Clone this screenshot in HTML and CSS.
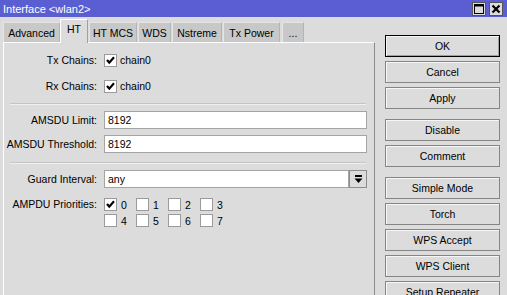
FILE: index.html
```html
<!DOCTYPE html>
<html lang="en">
<head>
    <meta charset="UTF-8">
    <title>Interface &lt;wlan2&gt;</title>
    <link rel="stylesheet" href="styles.css">
</head>
<body>
    <div class="window">

        <!-- Title bar -->
        <div class="titlebar">
            <span class="title">Interface &lt;wlan2&gt;</span>
            <div class="tb-btns">
                <span class="tb-btn">
                    <svg width="12" height="12" viewBox="0 0 12 12"><rect x="1.5" y="1.5" width="9" height="9" fill="none" stroke="#000" stroke-width="1"/><line x1="1" y1="2.5" x2="11" y2="2.5" stroke="#000" stroke-width="2"/></svg>
                </span>
                <span class="tb-btn">
                    <svg width="12" height="12" viewBox="0 0 12 12"><path d="M2.5 2.5 L9.5 9.5 M9.5 2.5 L2.5 9.5" stroke="#000" stroke-width="2.2"/></svg>
                </span>
            </div>
        </div>

        <div class="content">
            <div class="main">
                <!-- Tabs -->
                <div class="tabs">
                    <div class="tab w-adv">Advanced</div>
                    <div class="tab active w-ht">HT</div>
                    <div class="tab w-mcs">HT MCS</div>
                    <div class="tab w-wds">WDS</div>
                    <div class="tab w-ns">Nstreme</div>
                    <div class="tab w-tx">Tx Power</div>
                    <div class="tab w-more">...</div>
                </div>

                <!-- HT panel -->
                <div class="panel">
                    <div class="row check-row first">
                        <label class="lbl">Tx Chains:</label>
                        <span class="cb checked"></span>
                        <span class="cb-text">chain0</span>
                    </div>
                    <div class="row check-row">
                        <label class="lbl">Rx Chains:</label>
                        <span class="cb checked"></span>
                        <span class="cb-text">chain0</span>
                    </div>

                    <div class="sep"></div>

                    <div class="row field-row r-limit">
                        <label class="lbl">AMSDU Limit:</label>
                        <div class="input">8192</div>
                    </div>
                    <div class="row field-row r-thresh">
                        <label class="lbl">AMSDU Threshold:</label>
                        <div class="input">8192</div>
                    </div>

                    <div class="sep sep2"></div>

                    <div class="row field-row r-guard">
                        <label class="lbl">Guard Interval:</label>
                        <div class="input select">any</div>
                        <span class="drop">
                            <svg width="9" height="9" viewBox="0 0 9 9"><rect x="1" y="0" width="7" height="2" fill="#000"/><path d="M0.5 3.5 H8.5 L4.5 8 Z" fill="#000"/></svg>
                        </span>
                    </div>

                    <div class="row prio-row">
                        <label class="lbl">AMPDU Priorities:</label>
                        <div class="prio-grid">
                            <div class="prio"><span class="cb checked"></span>0</div>
                            <div class="prio"><span class="cb"></span>1</div>
                            <div class="prio"><span class="cb"></span>2</div>
                            <div class="prio"><span class="cb"></span>3</div>
                            <div class="prio"><span class="cb"></span>4</div>
                            <div class="prio"><span class="cb"></span>5</div>
                            <div class="prio"><span class="cb"></span>6</div>
                            <div class="prio"><span class="cb"></span>7</div>
                        </div>
                    </div>
                </div>
            </div>

            <!-- Buttons column -->
            <div class="side">
                <div class="btn default">OK</div>
                <div class="btn">Cancel</div>
                <div class="btn">Apply</div>
                <div class="btn group">Disable</div>
                <div class="btn">Comment</div>
                <div class="btn group">Simple Mode</div>
                <div class="btn">Torch</div>
                <div class="btn">WPS Accept</div>
                <div class="btn">WPS Client</div>
                <div class="btn">Setup Repeater</div>
            </div>
        </div>
    </div>
</body>
</html>
```

FILE: styles.css
```css
/* General */
* {
    margin: 0;
    padding: 0;
    box-sizing: border-box;
}
body {
    background-color: #dcdcdc;
    font-family: "Liberation Sans", Arial, sans-serif;
    font-size: 10.5px;
    color: #000;
    overflow: hidden;
}
.window {
    width: 507px;
    height: 295px;
    display: flex;
    flex-direction: column;
    background-color: #dcdcdc;
    overflow: hidden;
}

/* Title bar */
.titlebar {
    height: 17px;
    flex-shrink: 0;
    background-color: #5b5ed2;
    color: #fff;
    display: flex;
    align-items: center;
    justify-content: space-between;
    padding-left: 3px;
    padding-right: 4px;
}
.title {
    font-size: 11px;
}
.tb-btns {
    display: flex;
    gap: 3px;
}
.tb-btn {
    width: 14px;
    height: 14px;
    background-color: #dcdcdc;
    border: 1px solid #555;
    display: flex;
    align-items: center;
    justify-content: center;
}

.content {
    flex: 1;
    min-height: 0;
    display: flex;
}

/* Left side: tabs + panel */
.main {
    width: 375px;
    padding-left: 3px;
    display: flex;
    flex-direction: column;
}
.tabs {
    height: 25px;
    flex-shrink: 0;
    display: flex;
    align-items: flex-end;
    gap: 1px;
}
.tab {
    height: 20px;
    background-color: #c8c8c8;
    border-top: 1px solid #e4e4e4;
    border-left: 1px solid #e4e4e4;
    border-right: 1px solid #b4b4b4;
    display: flex;
    align-items: center;
    justify-content: center;
    padding-top: 1px;
}
.tab.active {
    height: 24px;
    margin-bottom: -1px;
    background-color: #dcdcdc;
    border-top: 1px solid #fff;
    border-left: 1px solid #fff;
    border-right: 1px solid #a0a0a0;
    align-items: flex-start;
    padding-top: 3px;
    position: relative;
    z-index: 1;
}
.w-adv { width: 57px; }
.w-ht { width: 28px; margin-left: -1px; }
.w-mcs { width: 48px; }
.w-wds { width: 33px; }
.w-ns { width: 50px; }
.w-tx { width: 57px; }
.w-more { width: 22px; margin-left: 1px; }

.panel {
    flex: 1;
    border-top: 1px solid #fff;
    border-left: 1px solid #fff;
    border-right: 1px solid #8c8c8c;
    display: flex;
    flex-direction: column;
}

/* Form rows */
.row {
    display: flex;
    align-items: center;
    flex-shrink: 0;
}
.lbl {
    width: 93px;
    text-align: right;
    margin-right: 7px;
    white-space: nowrap;
}
.check-row {
    height: 26px;
}
.check-row.first {
    margin-top: 4px;
}
.cb {
    width: 13px;
    height: 13px;
    background-color: #fff;
    border: 1px solid #9a9a9a;
    display: inline-block;
    flex-shrink: 0;
}
.cb.checked {
    background-image: url("data:image/svg+xml;utf8,<svg xmlns='http://www.w3.org/2000/svg' width='11' height='11' viewBox='0 0 11 11'><path d='M2 5 L4.3 7.6 L9 2.2' fill='none' stroke='black' stroke-width='2.2'/></svg>");
    background-repeat: no-repeat;
    background-position: center;
}
.cb-text {
    margin-left: 3px;
}

.sep {
    flex-shrink: 0;
    margin: 4px 8px 0 6px;
    height: 2px;
    border-top: 1px solid #c4c4c4;
    border-bottom: 1px solid #f0f0f0;
}
.sep2 {
    margin-top: 9px;
}

.field-row {
    height: 18px;
}
.r-limit { margin-top: 6px; }
.r-thresh { margin-top: 6px; }
.r-guard { margin-top: 6px; }

.input {
    width: 263px;
    height: 18px;
    background-color: #fff;
    border: 1px solid #a4a4a4;
    padding-left: 3px;
    display: flex;
    align-items: center;
}
.input.select {
    width: 245px;
}
.drop {
    width: 18px;
    height: 18px;
    border: 1px solid #8c8c8c;
    background-color: #dcdcdc;
    display: flex;
    align-items: center;
    justify-content: center;
}

/* AMPDU priorities */
.prio-row {
    margin-top: 10px;
    align-items: flex-start;
}
.prio-row .lbl {
    line-height: 13px;
}
.prio-grid {
    display: grid;
    grid-template-columns: repeat(4, 32px);
    row-gap: 3px;
}
.prio {
    display: flex;
    align-items: center;
    gap: 4px;
    height: 13px;
}

/* Buttons column */
.side {
    width: 115px;
    margin-left: 10px;
    padding-top: 18px;
    display: flex;
    flex-direction: column;
    gap: 4px;
}
.btn {
    height: 22px;
    flex-shrink: 0;
    border: 1px solid #858585;
    box-shadow: inset 1px 1px 0 #f6f6f6;
    background-color: #dcdcdc;
    display: flex;
    align-items: center;
    justify-content: center;
}
.btn.default {
    border: 1px solid #000;
    box-shadow: inset 1px 1px 0 #f6f6f6, inset -1px -1px 0 #a0a0a0;
}
.btn.group {
    margin-top: 6px;
}
```
